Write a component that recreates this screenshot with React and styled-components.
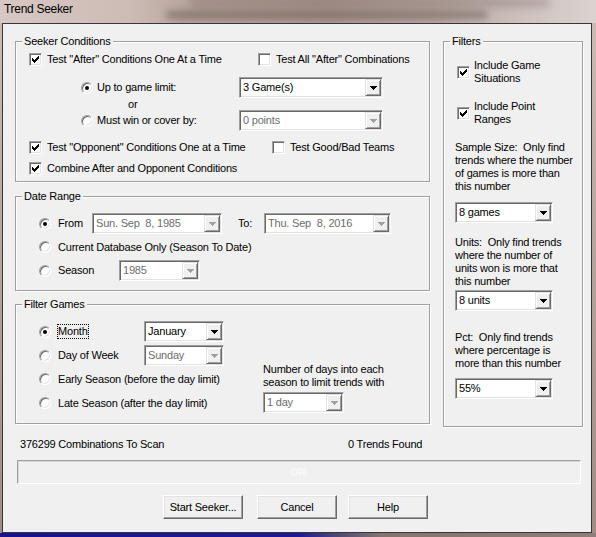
import React from "react";
import styled, { createGlobalStyle } from "styled-components";

const GlobalStyle = createGlobalStyle`
  html, body { margin: 0; padding: 0; }
  body {
    width: 596px;
    height: 537px;
    overflow: hidden;
    font-family: "Liberation Sans", Arial, sans-serif;
    font-size: 11px;
    line-height: 13px;
    letter-spacing: -0.2px;
    color: #000;
  }
  * { box-sizing: border-box; }
`;

/* ---------- window chrome ---------- */

const Frame = styled.div`
  width: 596px;
  height: 537px;
  display: flex;
  flex-direction: column;
  background:
    linear-gradient(90deg, #17158c 0%, #1c1a94 50%, #4a4478 56%, #837671 64%, #8c7f7a 100%) left bottom / 100% 4px no-repeat,
    linear-gradient(180deg, #cdbcb7 0%, #b9a7a1 40%, #9f8c85 100%);
`;

const TitleBar = styled.div`
  position: relative;
  flex: none;
  height: 23px;
  padding: 2px 0 0 4px;
  overflow: hidden;
  background: linear-gradient(90deg, #d7c8c4 0%, #cdbbb5 22%, #b7a59e 31%, #ad9a93 55%, #b8a8a2 73%, #cdc2be 88%, #dbd3d0 100%);

  &::before {
    content: "";
    position: absolute;
    left: 190px;
    top: -2px;
    width: 360px;
    height: 9px;
    border-radius: 4px;
    background: rgba(88, 70, 64, 0.28);
    filter: blur(4px);
  }
  &::after {
    content: "";
    position: absolute;
    left: 166px;
    top: 11px;
    width: 322px;
    height: 8px;
    border-radius: 4px;
    background: rgba(62, 48, 43, 0.38);
    filter: blur(3.5px);
  }
`;

const TitleText = styled.span`
  position: relative;
  z-index: 1;
  font-size: 12px;
  line-height: 14px;
  letter-spacing: -0.3px;
`;

const Client = styled.div`
  flex: 1;
  margin: 0 4px 4px 2px;
  border: 1px solid #3b3535;
  background: #f0f0f0;
  padding: 17px 7px 0 12px;
  display: flex;
  flex-direction: column;
`;

/* ---------- layout ---------- */

const MainRow = styled.div`
  display: flex;
  gap: 13px;
  height: 386px;
  flex: none;
`;

const LeftCol = styled.div`
  width: 415px;
  display: flex;
  flex-direction: column;
`;

const Group = styled.div`
  position: relative;
  flex: none;
  width: ${(p) => p.$w}px;
  height: ${(p) => p.$h}px;
  margin-bottom: ${(p) => p.$mb || 0}px;
  padding-left: ${(p) => p.$pl}px;
  border: 1px solid #a0a0a0;
  box-shadow: inset 1px 1px 0 #fff, 1px 1px 0 #fff;
  display: flex;
  flex-direction: column;
  align-items: flex-start;
`;

const GroupLabel = styled.span`
  position: absolute;
  top: -7px;
  left: 6px;
  padding: 0 2px;
  background: #f0f0f0;
  white-space: nowrap;
`;

const Row = styled.div`
  display: flex;
  align-items: center;
  flex: none;
  height: ${(p) => p.$h}px;
  margin-top: ${(p) => p.$mt || 0}px;
  padding-left: ${(p) => p.$pl || 0}px;
`;

const Option = styled.div`
  display: flex;
  align-items: center;
  flex: none;
  width: ${(p) => (p.$w ? `${p.$w}px` : "auto")};
  gap: ${(p) => p.$gap ?? 5}px;
  margin-top: ${(p) => p.$mt || 0}px;
  margin-left: ${(p) => p.$ml || 0}px;
`;

const Caption = styled.span`
  white-space: nowrap;
`;

const Focused = styled.span`
  white-space: nowrap;
  border: 1px dotted #000;
  padding: 0;
`;

const Note = styled.div`
  white-space: nowrap;
  line-height: 13px;
  margin-top: ${(p) => p.$mt || 0}px;
`;

const ToLabel = styled.span`
  width: 26px;
  margin-left: 16px;
  flex: none;
`;

const FilterBody = styled.div`
  display: flex;
  margin-top: 16px;
`;

const FilterOptions = styled.div`
  width: 224px;
  display: flex;
  flex-direction: column;
`;

const DayLimit = styled.div`
  display: flex;
  flex-direction: column;
  align-items: flex-start;
  margin-top: 42px;
`;

/* ---------- classic controls ---------- */

const CheckBoxBox = styled.span`
  width: 13px;
  height: 13px;
  flex: none;
  background: #fff;
  border: 1px solid;
  border-color: #a0a0a0 #fff #fff #a0a0a0;
  box-shadow: inset 1px 1px 0 #696969, inset -1px -1px 0 #e3e3e3;
  display: flex;
  align-items: center;
  justify-content: center;
  svg { display: block; }
`;

const CHECK_ROWS = [[6], [5, 6], [0, 4, 5, 6], [0, 1, 3, 4, 5], [0, 1, 2, 3, 4], [1, 2, 3], [2]];

const CheckMark = () => (
  <svg width="7" height="7" viewBox="0 0 7 7" shapeRendering="crispEdges">
    {CHECK_ROWS.flatMap((xs, y) =>
      xs.map((x) => <rect key={`${x}-${y}`} x={x} y={y} width="1" height="1" fill="#000" />)
    )}
  </svg>
);

const CheckBox = ({ checked }) => <CheckBoxBox>{checked && <CheckMark />}</CheckBoxBox>;

const Radio = styled.span`
  width: 12px;
  height: 12px;
  flex: none;
  border-radius: 50%;
  background: #fff;
  border: 1px solid;
  border-color: #a0a0a0 #fff #fff #a0a0a0;
  box-shadow: inset 1px 1px 0 #696969, inset -1px -1px 0 #e3e3e3;
  display: flex;
  align-items: center;
  justify-content: center;

  &::after {
    content: "";
    display: ${(p) => (p.$on ? "block" : "none")};
    width: 4px;
    height: 4px;
    border-radius: 50%;
    background: #000;
  }
`;

const ComboBox = styled.div`
  display: flex;
  flex: none;
  width: ${(p) => p.$w}px;
  height: 21px;
  margin-top: ${(p) => p.$mt || 0}px;
  padding: 1px;
  background: #fff;
  border: 1px solid;
  border-color: #a0a0a0 #fff #fff #a0a0a0;
  box-shadow: inset 1px 1px 0 #696969, inset -1px -1px 0 #e3e3e3;
`;

const ComboValue = styled.span`
  flex: 1;
  padding-left: 2px;
  line-height: 17px;
  white-space: pre;
  overflow: hidden;
  color: ${(p) => (p.$disabled ? "#6d6d6d" : "#000")};
`;

const ArrowButton = styled.span`
  width: 16px;
  height: 17px;
  flex: none;
  display: flex;
  align-items: center;
  justify-content: center;
  background: #f0f0f0;
  border: 1px solid;
  border-color: #e3e3e3 #696969 #696969 #e3e3e3;
  box-shadow: inset 1px 1px 0 #fff, inset -1px -1px 0 #a0a0a0;
  svg { display: block; }
`;

const DownArrow = ({ color }) => (
  <svg width="7" height="4" viewBox="0 0 7 4" shapeRendering="crispEdges">
    <path d="M0 0h7v1H0zM1 1h5v1H1zM2 2h3v1H2zM3 3h1v1H3z" fill={color} />
  </svg>
);

const Combo = ({ w, mt, value, disabled }) => (
  <ComboBox $w={w} $mt={mt}>
    <ComboValue $disabled={disabled}>{value}</ComboValue>
    <ArrowButton>
      <DownArrow color={disabled ? "#a0a0a0" : "#000"} />
    </ArrowButton>
  </ComboBox>
);

/* ---------- footer ---------- */

const StatusRow = styled.div`
  display: flex;
  height: 13px;
  margin-top: 11px;
  padding-left: 5px;
`;

const StatusText = styled.span`
  width: ${(p) => (p.$w ? `${p.$w}px` : "auto")};
  white-space: nowrap;
`;

const Progress = styled.div`
  width: 564px;
  height: 24px;
  margin: 9px 0 0 2px;
  border: 1px solid;
  border-color: #a0a0a0 #fff #fff #a0a0a0;
  box-shadow: inset 1px 1px 0 #d8d8d8;
  background: #f0f0f0;
  display: flex;
  align-items: center;
  justify-content: center;
  color: #fcfcfc;
`;

const ButtonRow = styled.div`
  display: flex;
  margin-top: 11px;
  padding-left: 148px;
`;

const Button = styled.button`
  width: 80px;
  height: 24px;
  margin-left: ${(p) => p.$ml || 0}px;
  padding: 0;
  font: inherit;
  letter-spacing: inherit;
  color: #000;
  background: #f0f0f0;
  border: 1px solid;
  border-color: #fff #696969 #696969 #fff;
  box-shadow: inset -1px -1px 0 #a0a0a0, inset 1px 1px 0 #e3e3e3;
`;

export default function App() {
  return (
    <>
      <GlobalStyle />
      <Frame>
        <TitleBar>
          <TitleText>Trend Seeker</TitleText>
        </TitleBar>
        <Client>
          <MainRow>
            <LeftCol>
              <Group $w={415} $h={141} $mb={14} $pl={13}>
                <GroupLabel>Seeker Conditions</GroupLabel>
                <Row $h={18} $mt={8}>
                  <Option $w={229}>
                    <CheckBox checked />
                    <Caption>Test "After" Conditions One At a Time</Caption>
                  </Option>
                  <Option>
                    <CheckBox />
                    <Caption>Test All "After" Combinations</Caption>
                  </Option>
                </Row>
                <Row $h={21} $mt={9} $pl={52}>
                  <Option $w={158} $gap={4}>
                    <Radio $on />
                    <Caption>Up to game limit:</Caption>
                  </Option>
                  <Combo w={144} value="3 Game(s)" />
                </Row>
                <Row $h={12} $pl={99}>
                  <Caption>or</Caption>
                </Row>
                <Row $h={21} $pl={52}>
                  <Option $w={158} $gap={4}>
                    <Radio />
                    <Caption>Must win or cover by:</Caption>
                  </Option>
                  <Combo w={144} value="0 points" disabled />
                </Row>
                <Row $h={18} $mt={7}>
                  <Option $w={243}>
                    <CheckBox checked />
                    <Caption>Test "Opponent" Conditions One at a Time</Caption>
                  </Option>
                  <Option>
                    <CheckBox />
                    <Caption>Test Good/Bad Teams</Caption>
                  </Option>
                </Row>
                <Row $h={18} $mt={3}>
                  <Option>
                    <CheckBox checked />
                    <Caption>Combine After and Opponent Conditions</Caption>
                  </Option>
                </Row>
              </Group>

              <Group $w={415} $h={95} $mb={13} $pl={23}>
                <GroupLabel>Date Range</GroupLabel>
                <Row $h={21} $mt={16}>
                  <Option $w={53} $gap={7}>
                    <Radio $on />
                    <Caption>From</Caption>
                  </Option>
                  <Combo w={130} value={"Sun. Sep  8, 1985"} disabled />
                  <ToLabel>To:</ToLabel>
                  <Combo w={127} value={"Thu. Sep  8, 2016"} disabled />
                </Row>
                <Row $h={18} $mt={4}>
                  <Option $gap={7}>
                    <Radio />
                    <Caption>Current Database Only (Season To Date)</Caption>
                  </Option>
                </Row>
                <Row $h={21} $mt={4}>
                  <Option $w={80} $gap={7}>
                    <Radio />
                    <Caption>Season</Caption>
                  </Option>
                  <Combo w={81} value="1985" disabled />
                </Row>
              </Group>

              <Group $w={415} $h={120} $pl={23}>
                <GroupLabel>Filter Games</GroupLabel>
                <FilterBody>
                  <FilterOptions>
                    <Row $h={21}>
                      <Option $w={105} $gap={6}>
                        <Radio $on />
                        <Focused>Month</Focused>
                      </Option>
                      <Combo w={80} value="January" />
                    </Row>
                    <Row $h={21} $mt={3}>
                      <Option $w={105} $gap={7}>
                        <Radio />
                        <Caption>Day of Week</Caption>
                      </Option>
                      <Combo w={80} value="Sunday" disabled />
                    </Row>
                    <Row $h={18} $mt={4}>
                      <Option $gap={7}>
                        <Radio />
                        <Caption>Early Season (before the day limit)</Caption>
                      </Option>
                    </Row>
                    <Row $h={18} $mt={6}>
                      <Option $gap={7}>
                        <Radio />
                        <Caption>Late Season (after the day limit)</Caption>
                      </Option>
                    </Row>
                  </FilterOptions>
                  <DayLimit>
                    <Note>
                      Number of days into each
                      <br />
                      season to limit trends with
                    </Note>
                    <Combo w={81} mt={3} value="1 day" disabled />
                  </DayLimit>
                </FilterBody>
              </Group>
            </LeftCol>

            <Group $w={140} $h={386} $pl={11}>
              <GroupLabel>Filters</GroupLabel>
              <Option $mt={17} $ml={2} $gap={4}>
                <CheckBox checked />
                <Caption>
                  Include Game
                  <br />
                  Situations
                </Caption>
              </Option>
              <Option $mt={15} $ml={2} $gap={4}>
                <CheckBox checked />
                <Caption>
                  Include Point
                  <br />
                  Ranges
                </Caption>
              </Option>
              <Note $mt={15}>
                Sample Size:&nbsp; Only find
                <br />
                trends where the number
                <br />
                of games is more than
                <br />
                this number
              </Note>
              <Combo w={98} mt={9} value="8 games" />
              <Note $mt={13}>
                Units:&nbsp; Only find trends
                <br />
                where the number of
                <br />
                units won is more that
                <br />
                this number
              </Note>
              <Combo w={98} mt={2} value="8 units" />
              <Note $mt={20}>
                Pct:&nbsp; Only find trends
                <br />
                where percentage is
                <br />
                more than this number
              </Note>
              <Combo w={98} mt={8} value="55%" />
            </Group>
          </MainRow>

          <StatusRow>
            <StatusText $w={328}>376299 Combinations To Scan</StatusText>
            <StatusText>0 Trends Found</StatusText>
          </StatusRow>
          <Progress>0%</Progress>
          <ButtonRow>
            <Button>Start Seeker...</Button>
            <Button $ml={14}>Cancel</Button>
            <Button $ml={11}>Help</Button>
          </ButtonRow>
        </Client>
      </Frame>
    </>
  );
}
